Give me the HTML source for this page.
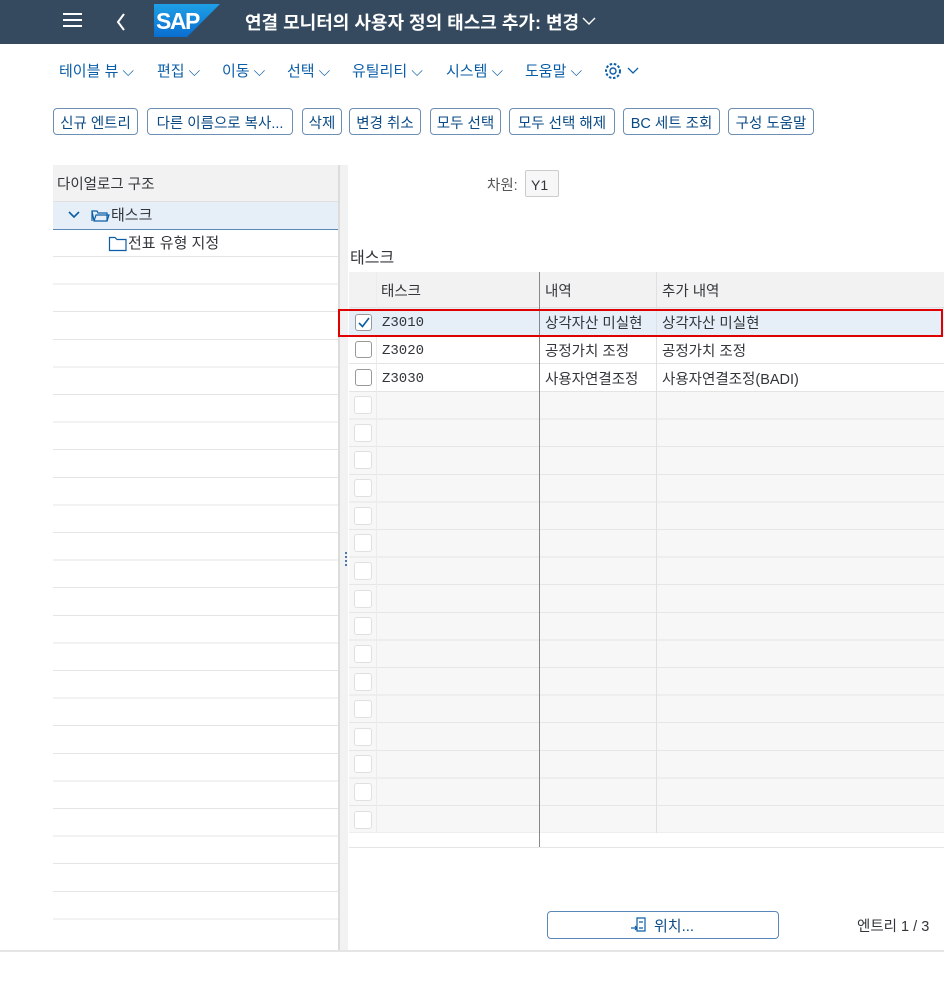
<!DOCTYPE html>
<html><head><meta charset="utf-8"><style>
*{box-sizing:border-box;margin:0;padding:0}
body{width:944px;height:995px;background:#fff;position:relative;overflow:hidden;font-family:"Liberation Sans","Noto Sans CJK KR",sans-serif;color:#32363a}
.a{position:absolute}
.hdr{left:0;top:0;width:944px;height:44px;background:#354a5f}
.menu{top:60px;font-size:15px;color:#0a5ea8;white-space:nowrap}
.btn{top:108px;height:27px;border:1px solid #6d8fb3;border-radius:4px;font-size:14.5px;color:#0a4a85;display:flex;align-items:center;justify-content:center;background:#fff;white-space:nowrap;padding-top:2px}
.cb{width:17px;height:17px;border:1px solid #c9c9c9;border-radius:3px;background:#fff}
.row{left:349px;width:595px;height:27.7px;border-bottom:1px solid #e4e4e4;font-size:14px}
.mono{font-family:"Liberation Mono",monospace;font-size:14px}
</style></head><body>
<div class="a hdr"></div>
<div class="a" style="left:63px;top:13px;width:19px;height:2px;background:#fff;box-shadow:0 6px 0 #fff,0 12px 0 #fff"></div>
<svg class="a" style="left:115px;top:12px" width="12" height="20"><path d="M9 2 L3 10 L9 18" stroke="#fff" stroke-width="2" fill="none"/></svg>
<svg class="a" style="left:154px;top:4px" width="66" height="33"><defs><linearGradient id="g" x1="0" y1="0" x2="0" y2="1"><stop offset="0" stop-color="#1ea0e6"/><stop offset="1" stop-color="#0a6ed1"/></linearGradient></defs><path d="M0 0H66L33 33H0Z" fill="url(#g)"/><text x="2" y="25" font-family="Liberation Sans" font-weight="bold" font-size="23" letter-spacing="-1.5" fill="#fff">SAP</text></svg>
<div class="a" style="left:245px;top:9px;font-size:18px;font-weight:bold;color:#fff;white-space:nowrap">연결 모니터의 사용자 정의 태스크 추가: 변경</div>
<svg class="a" style="left:581px;top:15px" width="16" height="12"><path d="M2 3 L8 9 L14 3" stroke="#fff" stroke-width="1.4" fill="none"/></svg>

<div class="a menu" style="left:59px">테이블 뷰 ⌵</div>
<div class="a menu" style="left:157px">편집 ⌵</div>
<div class="a menu" style="left:222px">이동 ⌵</div>
<div class="a menu" style="left:287px">선택 ⌵</div>
<div class="a menu" style="left:352px">유틸리티 ⌵</div>
<div class="a menu" style="left:446px">시스템 ⌵</div>
<div class="a menu" style="left:525px">도움말 ⌵</div>
<svg class="a" style="left:604px;top:61px" width="38" height="20"><circle cx="9" cy="10" r="3" stroke="#0a5ea8" stroke-width="1.4" fill="none"/><circle cx="9" cy="10" r="7" stroke="#0a5ea8" stroke-width="2" stroke-dasharray="2.5 1.7" fill="none"/><path d="M24 7 L29 12 L34 7" stroke="#0a5ea8" stroke-width="1.3" fill="none"/></svg>

<div class="a btn" style="left:53px;width:85px">신규 엔트리</div>
<div class="a btn" style="left:147px;width:146px">다른 이름으로 복사...</div>
<div class="a btn" style="left:302px;width:40px">삭제</div>
<div class="a btn" style="left:349px;width:72px">변경 취소</div>
<div class="a btn" style="left:430px;width:71px">모두 선택</div>
<div class="a btn" style="left:509px;width:106px">모두 선택 해제</div>
<div class="a btn" style="left:623px;width:97px">BC 세트 조회</div>
<div class="a btn" style="left:728px;width:86px">구성 도움말</div>

<!-- left tree -->
<div class="a" style="left:53px;top:165px;width:287px;height:37px;background:#f2f2f2;border-bottom:1px solid #e0e0e0;font-size:14.5px;padding:8px 0 0 4px">다이얼로그 구조</div>
<div class="a" style="left:53px;top:202px;width:287px;height:28px;background:#e6eef7;border-bottom:1px solid #5b87b8"></div>
<svg class="a" style="left:67px;top:210px" width="14" height="10"><path d="M2 2 L7 7 L12 2" stroke="#0a5ea8" stroke-width="1.6" fill="none"/></svg>
<svg class="a" style="left:90px;top:207px" width="20" height="16"><path d="M2 4H7L8 6H17V14H4Z M2 4V14" stroke="#0a5ea8" stroke-width="1.2" fill="none"/><path d="M4 14L6 8H19L17 14" stroke="#0a5ea8" stroke-width="1.2" fill="none"/></svg>
<div class="a" style="left:111px;top:204px;font-size:15px">태스크</div>
<svg class="a" style="left:108px;top:235px" width="20" height="17"><path d="M1.5 2.5H7L9 4.5H18V15.5H1.5Z" stroke="#0a5ea8" stroke-width="1.2" fill="none"/></svg>
<div class="a" style="left:128px;top:232px;font-size:15px">전표 유형 지정</div>
<div class="a" style="left:53px;top:257px;width:287px;height:678px;background:repeating-linear-gradient(#fff 0,#fff 26.6px,#e5e5e5 26.6px,#e5e5e5 27.6px)"></div>
<div class="a" style="left:53px;top:256px;width:287px;height:1px;background:#e5e5e5"></div>
<div class="a" style="left:338px;top:165px;width:10px;height:785px;background:#f2f2f2;border-left:2px solid #dcdcdc"></div>
<div class="a" style="left:345px;top:552px;width:2px;height:14px;background:repeating-linear-gradient(#4a7ab0 0,#4a7ab0 2px,transparent 2px,transparent 4px)"></div>

<!-- right -->
<div class="a" style="left:487px;top:174px;font-size:14.5px;color:#555">차원:</div>
<div class="a" style="left:525px;top:170px;width:34px;height:27px;border:1px solid #ccc;border-radius:2px;background:#f7f7f7;padding:6px 0 0 5px;font-size:14px">Y1</div>
<div class="a" style="left:350px;top:244px;font-size:16px">태스크</div>

<div class="a" style="left:349px;top:272px;width:595px;height:36px;background:#f2f2f2;border-bottom:1px solid #e0e0e0"></div>
<div class="a" style="left:381px;top:280px;font-size:14.5px">태스크</div>
<div class="a" style="left:545px;top:280px;font-size:14.5px">내역</div>
<div class="a" style="left:662px;top:280px;font-size:14.5px">추가 내역</div>

<div class="a row" style="top:308px;background:#e6eef7"></div>
<div class="a row" style="top:336px"></div>
<div class="a row" style="top:364px"></div>
<div class="a" style="left:349px;top:392px;width:595px;height:441px;background:repeating-linear-gradient(#f7f7f7 0,#f7f7f7 26.6px,#e6e6e6 26.6px,#e6e6e6 27.6px)"></div>
<div class="a" style="left:349px;top:272px;width:28px;height:561px;border-right:1px solid #ececec"></div>
<div class="a" style="left:539px;top:272px;width:1px;height:576px;background:#888"></div>
<div class="a" style="left:656px;top:272px;width:1px;height:561px;background:#e0e0e0"></div>
<div class="a" style="left:349px;top:847px;width:595px;height:1px;background:#e5e5e5"></div>

<div class="a cb" style="left:355px;top:314px;border-color:#999"></div>
<svg class="a" style="left:357px;top:316px" width="14" height="13"><path d="M2 7L5.5 10.5L12 2" stroke="#0a5ea8" stroke-width="1.6" fill="none"/></svg>
<div class="a cb" style="left:355px;top:341px;border-color:#999"></div>
<div class="a cb" style="left:355px;top:369px;border-color:#999"></div>
<div class="a mono" style="left:382px;top:315px">Z3010</div>
<div class="a mono" style="left:382px;top:343px">Z3020</div>
<div class="a mono" style="left:382px;top:371px">Z3030</div>
<div class="a" style="left:545px;top:312px;font-size:14.5px">상각자산 미실현</div>
<div class="a" style="left:662px;top:312px;font-size:14.5px">상각자산 미실현</div>
<div class="a" style="left:545px;top:340px;font-size:14.5px">공정가치 조정</div>
<div class="a" style="left:662px;top:340px;font-size:14.5px">공정가치 조정</div>
<div class="a" style="left:545px;top:368px;font-size:14.5px">사용자연결조정</div>
<div class="a" style="left:662px;top:368px;font-size:14.5px">사용자연결조정(BADI)</div>
<div id="ecb"></div>
<script>
var h='';for(var k=0;k<16;k++){h+='<div class="a cb" style="left:354px;top:'+(396+27.65*k)+'px;width:18px;height:18px;border-color:#e0e0e0"></div>';}
document.getElementById('ecb').innerHTML=h;
</script>
<div class="a" style="left:338px;top:309px;width:605px;height:28px;border:2.5px solid #e00000"></div>

<div class="a" style="left:547px;top:911px;width:232px;height:28px;border:1px solid #5b87b8;border-radius:4px;background:#fff"></div>
<svg class="a" style="left:630px;top:916px" width="20" height="18"><path d="M7 2H15V15H7Z" stroke="#0a5ea8" stroke-width="1.2" fill="none"/><path d="M9 6H13M9 12H13M1 12H7M5 10L7 12L5 14" stroke="#0a5ea8" stroke-width="1.2" fill="none"/></svg>
<div class="a" style="left:654px;top:915px;font-size:15px;color:#0a4a85">위치...</div>
<div class="a" style="left:857px;top:915px;font-size:14.5px">엔트리 1 / 3</div>
<div class="a" style="left:0;top:950px;width:944px;height:2px;background:#e5e5e5"></div>
</body></html>
